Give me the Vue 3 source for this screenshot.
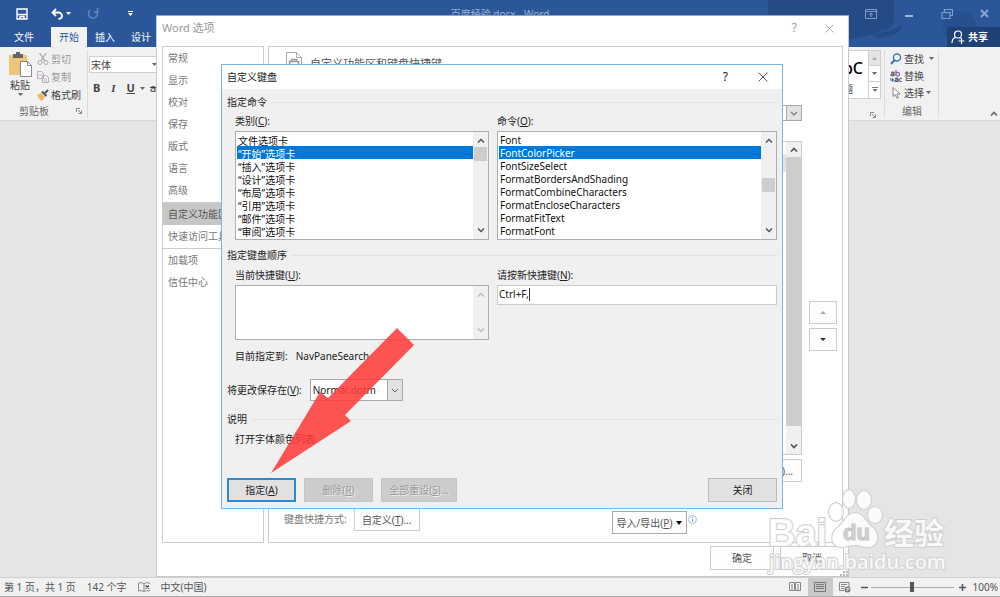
<script setup>
import { ref } from 'vue'

const tabs = ['开始', '插入', '设计']
const activeTab = ref('开始')

const navGroups = [
  ['常规', '显示', '校对', '保存', '版式', '语言', '高级'],
  ['自定义功能区', '快速访问工具栏'],
  ['加载项', '信任中心']
]
const activeNav = ref('自定义功能区')

const categories = [
  '文件选项卡',
  '“开始”选项卡',
  '“插入”选项卡',
  '“设计”选项卡',
  '“布局”选项卡',
  '“引用”选项卡',
  '“邮件”选项卡',
  '“审阅”选项卡'
]
const commands = [
  'Font',
  'FontColorPicker',
  'FontSizeSelect',
  'FormatBordersAndShading',
  'FormatCombineCharacters',
  'FormatEncloseCharacters',
  'FormatFitText',
  'FormatFont'
]
const category = ref(categories[1])
const command = ref(commands[1])
const newKey = ref('Ctrl+F,')
const currentKeys = ref('')
const zoom = ref(50)
</script>

<template>
  <div class="word">
    <header class="top">
      <svg class="top__decor" width="400" height="47" viewBox="0 0 400 47" aria-hidden="true">
        <path d="M168 0h126v20q0 8-10 10-40 16-116 17z" fill="#244b86" />
        <path d="M270 34q24-2 32-10 0 12-24 14z" fill="#244b86" />
        <circle cx="360" cy="28" r="17" fill="#265090" />
      </svg>
      <div class="titlebar">
        <div class="quick">
          <button aria-label="保存">
            <svg width="12" height="12" viewBox="0 0 12 12"><path d="M1 1h10v10H1zM1 6.500h10M4 11V8.500h4V11" fill="none" stroke="#fff" stroke-width="1.400" /></svg>
          </button>
          <button aria-label="撤消">
            <svg width="13" height="12" viewBox="0 0 13 12"><path d="M5 1L1.500 4.500 5 8M2 4.500h5.500q3.500.5 3.500 3.500 0 2.500-3.500 3" fill="none" stroke="#fff" stroke-width="1.800" /></svg>
          </button>
          <svg class="quick__caret" width="5" height="3" viewBox="0 0 5 3"><path d="M0 0h5L2.500 3z" fill="#fff" /></svg>
          <button class="quick__redo" aria-label="重复">
            <svg width="12" height="12" viewBox="0 0 12 12"><path d="M3 2.300A4.500 4.500 0 1 0 9.500 3M10.500 0v4H7" fill="none" stroke="#6688bd" stroke-width="1.500" /></svg>
          </button>
          <button aria-label="自定义快速访问工具栏">
            <svg width="5" height="5" viewBox="0 0 5 5"><path d="M0 0h5v1H0zM0 2h5L2.500 5z" fill="#fff" /></svg>
          </button>
        </div>
        <h1 class="titlebar__name">百度经验.docx - Word</h1>
        <div class="winbtns">
          <button aria-label="功能区显示选项">
            <svg width="12" height="10" viewBox="0 0 12 10"><path d="M.5.5h11v9H.5zM.5 2.500h11M6 8V4M4 6l2-2 2 2" fill="none" stroke="#7f9cc9" /></svg>
          </button>
          <button aria-label="最小化">
            <svg width="10" height="10" viewBox="0 0 10 10"><path d="M1 7h8" stroke="#9db3d6" stroke-width="2" /></svg>
          </button>
          <button aria-label="还原">
            <svg width="12" height="11" viewBox="0 0 12 11"><path d="M1 4.500h8v6H1zM3.500 4V1.500h8v6H9" fill="none" stroke="#7f9cc9" stroke-width="1.200" /></svg>
          </button>
          <button aria-label="关闭">
            <svg width="9" height="9" viewBox="0 0 9 9"><path d="M1 1l7 7M8 1L1 8" stroke="#8ba5cf" stroke-width="2" /></svg>
          </button>
        </div>
      </div>
      <nav class="tabs">
        <button class="tabs__item tabs__item--file">文件</button>
        <button
          v-for="tab in tabs"
          :key="tab"
          class="tabs__item"
          :class="{ 'tabs__item--active': tab === activeTab }"
          @click="activeTab = tab"
        >{{ tab }}</button>
        <button class="share">
          <svg width="14" height="14" viewBox="0 0 14 14"><circle cx="7" cy="4.500" r="3.500" fill="none" stroke="#fff" stroke-width="1.200" /><path d="M1 13q0-5 4-5.500M8 7.500l1.500 1M10.500 8v6M7.500 11h6" fill="none" stroke="#fff" stroke-width="1.200" /></svg>
          共享
        </button>
      </nav>
    </header>

    <section class="ribbon">
      <div class="group group--clip">
        <div class="group__body">
          <button class="paste">
            <svg width="24" height="25" viewBox="0 0 24 25"><path d="M1 3h18v20H1z" fill="#ecc57a" /><path d="M5 2h3V0h4v2h3v4H5z" fill="#666" /><path d="M12.500 9.500h7l4 4v11h-11z" fill="#fff" stroke="#888" /><path d="M19.500 9.500v4h4" fill="none" stroke="#888" /></svg>
            <span>粘贴</span>
            <svg width="5" height="3" viewBox="0 0 5 3"><path d="M0 0h5L2.500 3z" fill="#666" /></svg>
          </button>
          <div class="stack">
            <button class="tool tool--off">
              <svg width="12" height="12" viewBox="0 0 12 12"><path d="M2.500 0l5.500 8M9 0L4 8" stroke="#aaa" stroke-width="1.300" /><circle cx="3" cy="9.500" r="2" fill="none" stroke="#aaa" /><circle cx="9" cy="9.500" r="2" fill="none" stroke="#aaa" /></svg>
              剪切
            </button>
            <button class="tool tool--off">
              <svg width="12" height="12" viewBox="0 0 12 12"><path d="M.5.500h4l2 2v5h-6zM5.500 4.500h4l2 2v5h-6z" fill="#f4eef4" stroke="#bbadbd" /><path d="M2 4h3M7 8h3M7 10h3" stroke="#c9b5c9" /></svg>
              复制
            </button>
            <button class="tool">
              <svg width="12" height="12" viewBox="0 0 12 12"><path d="M0 6l4-2 4 4-3 4-2-1z" fill="#eab867" /><path d="M4 3l2-1 4 4-1 2z" fill="#555" /><path d="M8 4l3-3" stroke="#555" stroke-width="2" /></svg>
              格式刷
            </button>
          </div>
        </div>
        <div class="group__foot">
          <span>剪贴板</span>
          <svg width="6" height="6" viewBox="0 0 6 6"><path d="M.5 4V.5H4M2 2l3 3M5.500 2.500v3h-3" fill="none" stroke="#888" /></svg>
        </div>
      </div>
      <div class="group group--font">
        <label class="fontbox">
          <input type="text" value="宋体" aria-label="字体" />
          <svg width="5" height="3" viewBox="0 0 5 3"><path d="M0 0h5L2.500 3z" fill="#666" /></svg>
        </label>
        <div class="fmt">
          <button><b>B</b></button>
          <button><i>I</i></button>
          <button><u>U</u></button>
          <svg width="5" height="3" viewBox="0 0 5 3"><path d="M0 0h5L2.500 3z" fill="#666" /></svg>
          <button><s>abc</s></button>
        </div>
      </div>

      <div class="group group--styles">
        <div class="styles">
          <button class="styles__tile">
            <span class="styles__sample">AaBbC</span>
            <span class="styles__name">标题</span>
          </button>
          <div class="styles__scroll">
            <button class="off" aria-label="上一行"><svg width="5" height="3" viewBox="0 0 5 3"><path d="M0 3h5L2.500 0z" fill="#aaa" /></svg></button>
            <button aria-label="下一行"><svg width="5" height="3" viewBox="0 0 5 3"><path d="M0 0h5L2.500 3z" fill="#666" /></svg></button>
            <button aria-label="其他"><svg width="6" height="5" viewBox="0 0 6 5"><path d="M0 0h6v1H0zM.5 2h5L3 5z" fill="#777" /></svg></button>
          </div>
        </div>
        <div class="group__foot">
          <svg width="6" height="6" viewBox="0 0 6 6"><path d="M.5 4V.5H4M2 2l3 3M5.500 2.500v3h-3" fill="none" stroke="#888" /></svg>
        </div>
      </div>
      <div class="group group--edit">
        <div class="stack">
          <button class="tool">
            <svg width="12" height="12" viewBox="0 0 12 12"><circle cx="7" cy="4.500" r="3.500" fill="#fff" stroke="#3a76b8" stroke-width="1.500" /><path d="M4.500 7L1 11" stroke="#3a76b8" stroke-width="2" /></svg>
            查找
            <svg class="tool__caret" width="5" height="3" viewBox="0 0 5 3"><path d="M0 0h5L2.500 3z" fill="#666" /></svg>
          </button>
          <button class="tool">
            <svg width="12" height="12" viewBox="0 0 12 12">
              <g fill="none" stroke="#555" stroke-width="1.200">
                <path d="M1 2.500q3-1 3 .5v3M4 4Q1 3.500 1 5q.5 1.500 3 0" />
                <path d="M5 8.500q3-1 3 .5v3M8 10q-3-.5-3 1 .5 1.500 3 0" />
              </g>
              <path d="M6 0v6M6 3q3.500-1.500 3.500 1T6 5.500" fill="none" stroke="#9559b5" stroke-width="1.300" />
              <path d="M12 8.500q-2.500-.5-2.500 1.500t2.500 1.500M0 8v2h3M2 8.500L3.500 10 2 11.500" fill="none" stroke="#3a76b8" stroke-width="1.100" />
            </svg>
            替换
          </button>
          <button class="tool">
            <svg width="12" height="12" viewBox="0 0 12 12"><path d="M3 .5v9l2.200-2 1.800 4 1.500-.7-1.700-3.800H10z" fill="#fff" stroke="#888" /></svg>
            选择
            <svg width="5" height="3" viewBox="0 0 5 3"><path d="M0 0h5L2.500 3z" fill="#666" /></svg>
          </button>
        </div>
        <div class="group__foot"><span>编辑</span></div>
      </div>
      <button class="collapse" aria-label="折叠功能区">
        <svg width="8" height="5" viewBox="0 0 8 5"><path d="M1 4.500l3-3 3 3" fill="none" stroke="#666" stroke-width="1.600" /></svg>
      </button>
    </section>

    <main class="canvas"></main>

    <footer class="status">
      <span>第 1 页，共 1 页</span>
      <span>142 个字</span>
      <svg width="12" height="10" viewBox="0 0 12 10"><path d="M6 1.500Q3 0 .5 1v8Q3 8 6 9.500zM6 1.500Q8 0 11.500 1v1M6 9.500Q8 8 11.500 9V8" fill="none" stroke="#888" /><path d="M7.500 3.500l3.500 3M11 3.500l-3.500 3" stroke="#444" stroke-width="1.200" /></svg>
      <span>中文(中国)</span>
      <div class="status__views">
        <button aria-label="阅读视图">
          <svg width="12" height="10" viewBox="0 0 12 10"><path d="M.5.5h5v8h-5zM6.500.5h5v8h-5zM2 3h2M2 5h2M2 7h2M8 3h2M8 5h2M8 7h2" fill="none" stroke="#888" /></svg>
        </button>
        <button class="on" aria-label="页面视图">
          <svg width="12" height="10" viewBox="0 0 12 10"><path d="M.5.5h11v9H.5zM2 2.500h8M2 4.500h8M2 6.500h8" fill="none" stroke="#777" /></svg>
        </button>
        <button aria-label="Web 版式视图">
          <svg width="12" height="11" viewBox="0 0 12 11"><path d="M10 5V.5H.5v8H5M2 2.500h6M2 4.500h4M2 6.500h3" fill="none" stroke="#888" /><circle cx="8.500" cy="7.500" r="3" fill="#777" /><path d="M7 6l2 1-1 2M10 6v2" stroke="#eee" fill="none" /></svg>
        </button>
      </div>
      <div class="status__zoom">
        <button aria-label="缩小"><svg width="7" height="7" viewBox="0 0 7 7"><path d="M0 3.500h7" stroke="#555" stroke-width="1.500" /></svg></button>
        <input v-model="zoom" type="range" min="0" max="100" aria-label="显示比例" />
        <button aria-label="放大"><svg width="7" height="7" viewBox="0 0 7 7"><path d="M0 3.500h7M3.500 0v7" stroke="#555" stroke-width="1.500" /></svg></button>
        <span class="status__pct">100%</span>
      </div>
    </footer>

    <!-- Word options window -->
    <section class="options">
      <div class="options__title">
        <h2>Word 选项</h2>
        <button aria-label="帮助">?</button>
        <button aria-label="关闭选项">
          <svg width="9" height="9" viewBox="0 0 9 9"><path d="M.5.5l8 8M8.500.5l-8 8" stroke="#aaa" /></svg>
        </button>
      </div>
      <div class="options__body">
        <nav class="side">
          <div v-for="(group, i) in navGroups" :key="i" class="side__group">
            <button
              v-for="item in group"
              :key="item"
              :class="{ active: item === activeNav }"
              @click="activeNav = item"
            >{{ item }}</button>
          </div>
        </nav>
        <div class="pane">
          <div class="pane__head">
            <svg width="18" height="22" viewBox="0 0 18 22"><path d="M1.500 20V.5h10l5 5V20M11.500.5v5h5" fill="#fff" stroke="#aaa" /><path d="M4.500 15V9.500h9V15M6.500 9V7.500h5V9" fill="none" stroke="#999" stroke-width="1.500" /></svg>
            <h3>自定义功能区和键盘快捷键</h3>
          </div>
          <div class="pane__main">
            <div class="pane__col">
              <div class="combo combo--wide">
                <select aria-label="自定义功能区"></select>
                <span class="combo__arrow"><svg width="8" height="5" viewBox="0 0 8 5"><path d="M1 1l3 3 3-3" fill="none" stroke="#777" stroke-width="1.200" /></svg></span>
              </div>
              <div class="treebox">
                <div class="treebox__row"></div>
                <div class="vbar vbar--long">
                  <svg width="8" height="5" viewBox="0 0 8 5"><path d="M1 4.500l3-3 3 3" fill="none" stroke="#555" stroke-width="1.700" /></svg>
                  <span class="vbar__track"></span>
                  <svg width="8" height="5" viewBox="0 0 8 5"><path d="M1 .5l3 3 3-3" fill="none" stroke="#555" stroke-width="1.700" /></svg>
                </div>
              </div>
              <button class="flat flat--rename"><span>重命名(<u>M</u>)...</span></button>
            </div>
            <div class="pane__move">
              <button class="flat" aria-label="上移"><svg width="6" height="3" viewBox="0 0 6 3"><path d="M0 3h6L3 0z" fill="#aaa" /></svg></button>
              <button class="flat" aria-label="下移"><svg width="6" height="3" viewBox="0 0 6 3"><path d="M0 0h6L3 3z" fill="#333" /></svg></button>
            </div>
          </div>
          <div class="pane__foot">
            <span>键盘快捷方式:</span>
            <button class="flat flat--custom"><span>自定义(<u>T</u>)...</span></button>
            <button class="flat flat--export">
              <span>导入/导出(<u>P</u>)</span>
              <svg width="6" height="4" viewBox="0 0 6 4"><path d="M0 0h6L3 4z" fill="#000" /></svg>
            </button>
            <svg class="info" width="9" height="9" viewBox="0 0 9 9"><circle cx="4.500" cy="4.500" r="4" fill="#fff" stroke="#9cbbe3" /><path d="M4.500 4v3M4.500 2v1" stroke="#7ba3d8" /></svg>
          </div>
        </div>
      </div>
      <div class="options__foot">
        <button class="flat">确定</button>
        <button class="flat">取消</button>
      </div>
      <svg class="grip" width="8" height="8" viewBox="0 0 8 8"><path d="M6 0h2v2H6zM3 3h2v2H3zM6 3h2v2H6zM0 6h2v2H0zM3 6h2v2H3zM6 6h2v2H6z" fill="#bbb" /></svg>
    </section>

    <!-- Customize keyboard window -->
    <section class="dialog">
      <div class="dialog__title">
        <h2>自定义键盘</h2>
        <button aria-label="键盘帮助">?</button>
        <button aria-label="关闭键盘窗口">
          <svg width="10" height="10" viewBox="0 0 10 10"><path d="M.5.5l9 9M9.500.5l-9 9" stroke="#555" /></svg>
        </button>
      </div>
      <div class="dialog__body">
        <h3 class="legend">指定命令</h3>
        <div class="cols cols--lists">
          <div class="field">
            <label for="category">类别(<u>C</u>):</label>
            <div class="box">
              <select id="category" v-model="category" size="8">
                <option v-for="c in categories" :key="c">{{ c }}</option>
              </select>
              <div class="vbar">
                <svg width="8" height="5" viewBox="0 0 8 5"><path d="M1 4.500l3-3 3 3" fill="none" stroke="#555" stroke-width="1.500" /></svg>
                <span class="vbar__track"><i class="vbar__thumb"></i></span>
                <svg width="8" height="5" viewBox="0 0 8 5"><path d="M1 .5l3 3 3-3" fill="none" stroke="#555" stroke-width="1.500" /></svg>
              </div>
            </div>
          </div>
          <div class="field">
            <label for="command">命令(<u>O</u>):</label>
            <div class="box">
              <select id="command" v-model="command" size="8">
                <option v-for="c in commands" :key="c">{{ c }}</option>
              </select>
              <div class="vbar">
                <svg width="8" height="5" viewBox="0 0 8 5"><path d="M1 4.500l3-3 3 3" fill="none" stroke="#555" stroke-width="1.500" /></svg>
                <span class="vbar__track vbar__track--mid"><i class="vbar__thumb"></i></span>
                <svg width="8" height="5" viewBox="0 0 8 5"><path d="M1 .5l3 3 3-3" fill="none" stroke="#555" stroke-width="1.500" /></svg>
              </div>
            </div>
          </div>
        </div>

        <h3 class="legend legend--keys">指定键盘顺序</h3>
        <div class="cols cols--keys">
          <div class="field">
            <label for="current">当前快捷键(<u>U</u>):</label>
            <div class="box box--area">
              <textarea id="current" v-model="currentKeys"></textarea>
              <div class="vbar">
                <svg width="8" height="5" viewBox="0 0 8 5"><path d="M1 4.500l3-3 3 3" fill="none" stroke="#bbb" stroke-width="1.500" /></svg>
                <span class="vbar__track"></span>
                <svg width="8" height="5" viewBox="0 0 8 5"><path d="M1 .5l3 3 3-3" fill="none" stroke="#bbb" stroke-width="1.500" /></svg>
              </div>
            </div>
          </div>
          <div class="field">
            <label for="newkey">请按新快捷键(<u>N</u>):</label>
            <div class="box box--key">
              <input id="newkey" v-model="newKey" type="text" />
              <span class="cursor"></span>
            </div>
          </div>
        </div>

        <p class="assigned"><span>目前指定到:</span><span>NavPaneSearch</span></p>

        <div class="save">
          <label for="savein">将更改保存在(<u>V</u>):</label>
          <div class="combo combo--save">
            <select id="savein"><option>Normal.dotm</option></select>
            <span class="combo__arrow"><svg width="8" height="5" viewBox="0 0 8 5"><path d="M1 1l3 3 3-3" fill="none" stroke="#666" /></svg></span>
          </div>
        </div>

        <h3 class="legend legend--desc">说明</h3>
        <p class="desc">打开字体颜色列表</p>

        <div class="actions">
          <button class="btn btn--default">指定(<u>A</u>)</button>
          <button class="btn" disabled>删除(<u>R</u>)</button>
          <button class="btn btn--reset" disabled>全部重设(<u>S</u>)...</button>
          <button class="btn btn--close">关闭</button>
        </div>
      </div>
      <svg class="pointer" width="144" height="146" viewBox="0 0 144 146" aria-hidden="true">
        <path d="M0 145L49 64l8 6L126 0l17 17-69 70 6 6z" fill="#ff3c3c" fill-opacity=".87" />
      </svg>
    </section>

    <svg class="mark" width="182" height="90" viewBox="0 0 182 90">
      <g class="mark__shape">
        <text x="0" y="59" class="mark__bai">Bai</text>
        <ellipse cx="68" cy="25" rx="7" ry="9" />
        <ellipse cx="81" cy="12" rx="6" ry="9" />
        <ellipse cx="96" cy="13" rx="7" ry="9" />
        <ellipse cx="107" cy="28" rx="7" ry="8" />
        <path d="M87 26c8 0 10 8 17 14 7 5 8 19-3 20-6 1-9-2-14-2s-9 3-15 2c-11-2-9-15-2-20 7-6 9-14 17-14z" />
        <text x="116" y="57" class="mark__jy">经验</text>
      </g>
      <text x="75" y="53" class="mark__du">du</text>
      <text x="1" y="82" class="mark__url">jingyan.baidu.com</text>
    </svg>
  </div>
</template>

<style>
body {
  margin: 0;
}
</style>

<style scoped>
.word {
  position: relative;
  display: flex;
  flex-direction: column;
  min-height: 100vh;
  overflow: hidden;
  background: #e5e5e5;
  color: #444;
  font-family: "Noto Sans", "Noto Sans CJK SC", sans-serif;
  font-size: 10px;
  line-height: 16px;
}

.word *,
.word *::before,
.word *::after {
  box-sizing: border-box;
}

h1, h2, h3, p {
  margin: 0;
  font-size: 10px;
  font-weight: 400;
}

button, input, select, textarea {
  margin: 0;
  padding: 0;
  border: 0;
  border-radius: 0;
  background: none;
  color: inherit;
  font: inherit;
  white-space: nowrap;
  outline: none;
}

svg {
  flex: none;
  display: block;
}

/* title bar and tabs */
.top {
  position: relative;
  background: #2b579a;
  color: #fff;
}

.top__decor {
  position: absolute;
  top: 0;
  right: 0;
}

.titlebar {
  position: relative;
  display: grid;
  grid-template-columns: 1fr auto 1fr;
  align-items: center;
  height: 27px;
}

.titlebar__name {
  color: #9db3d6;
}

.quick {
  display: flex;
  align-items: center;
  padding-left: 16px;
}

.quick button + button {
  margin-left: 23px;
}

.quick__caret {
  margin-left: 2px;
}

.quick .quick__redo {
  margin-left: 16px;
}

.quick .quick__redo + button {
  margin-left: 29px;
}

.winbtns {
  display: flex;
  align-items: center;
  justify-content: flex-end;
  gap: 27px;
  padding-right: 11px;
}

.tabs {
  position: relative;
  display: flex;
  height: 20px;
}

.tabs__item {
  width: 36px;
  line-height: 18px;
}

.tabs__item--file {
  width: 48px;
  margin-right: 3px;
}

.tabs__item--active {
  background: #f1f1f1;
  color: #2b579a;
}

.share {
  display: flex;
  align-items: center;
  gap: 3px;
  width: 53px;
  margin-left: auto;
  padding-left: 4px;
  background: #1e4176;
  font-weight: 700;
}

/* ribbon */
.ribbon {
  display: flex;
  min-height: 74px;
  border-bottom: 1px solid #d8d8d8;
  background: #f1f1f1;
}

.group {
  display: flex;
  flex-direction: column;
  margin: 3px 0 2px;
  border-right: 1px solid #dcdcdc;
}

.group--clip {
  width: 88px;
  padding-left: 7px;
}

.group__body {
  display: flex;
  gap: 4px;
}

.group__foot {
  display: flex;
  align-items: center;
  justify-content: flex-end;
  gap: 27px;
  margin-top: auto;
  padding-right: 5px;
  color: #666;
  line-height: 14px;
}

.paste {
  display: flex;
  flex-direction: column;
  align-items: center;
  width: 26px;
  padding-top: 2px;
}

.stack {
  display: flex;
  flex-direction: column;
}

.tool {
  display: flex;
  align-items: center;
  gap: 2px;
  height: 18px;
}

.tool--off {
  color: #999;
}

.group--font {
  border: 0;
  padding: 6px 0 0 1px;
}

.fontbox {
  display: flex;
  align-items: center;
  width: 72px;
  height: 17px;
  border: 1px solid #d0d0d0;
  background: #fff;
}

.fontbox input {
  width: 62px;
  padding-left: 1px;
}

.fmt {
  display: flex;
  align-items: center;
  gap: 9px;
  padding: 7px 0 0 4px;
  font-size: 11px;
}

.fmt svg {
  margin: 0 -4px;
}

.fmt i {
  padding: 0 2px;
  font-family: "Liberation Serif", serif;
  font-weight: 700;
}

.fmt u {
  font-weight: 700;
}

.group--styles {
  width: 80px;
  margin-left: auto;
  padding-right: 3px;
}

.styles {
  display: flex;
  justify-content: flex-end;
  height: 49px;
  border: 1px solid #d0d0d0;
  background: #fff;
}

.styles__tile {
  display: flex;
  flex: 1;
  flex-direction: column;
  align-items: flex-end;
  justify-content: space-between;
  padding: 9px 5px 1px 0;
}

.styles__sample {
  color: #000;
  font-size: 16px;
  font-weight: 500;
}

.styles__name {
  padding-right: 10px;
}

.styles__scroll {
  display: grid;
  width: 12px;
  border-left: 1px solid #d0d0d0;
}

.styles__scroll button {
  display: grid;
  place-items: center;
}

.styles__scroll button + button {
  border-top: 1px solid #d0d0d0;
}

.styles__scroll .off {
  background: #e4e4e4;
}

.group--edit {
  width: 54px;
  padding-left: 5px;
}

.group--edit .tool {
  height: 17px;
}

.group--edit .group__foot {
  justify-content: center;
  padding-right: 4px;
}

.tool__caret {
  margin-left: 3px;
}

.collapse {
  align-self: flex-end;
  margin-left: 51px;
  padding: 0 2px 4px 0;
}

.canvas {
  flex: 1;
}

/* status bar */
.status {
  display: flex;
  align-items: center;
  gap: 11px;
  height: 20px;
  padding-left: 4px;
  border-top: 1px solid #d0d0d0;
  border-bottom: 1px solid #aaa;
  background: #f1f1f1;
  color: #555;
}

.status__views {
  display: flex;
  align-self: stretch;
  margin-left: auto;
}

.status__views button {
  display: grid;
  place-items: center;
  width: 25px;
}

.status__views .on {
  background: #c9c9c9;
}

.status__zoom {
  display: flex;
  align-items: center;
  margin-left: -8px;
}

.status__zoom input {
  width: 83px;
  height: 10px;
  margin: 0 5px 0 3px;
  background: linear-gradient(#aaa, #aaa) center / 100% 1px no-repeat;
  appearance: none;
}

.status__zoom input::-webkit-slider-thumb {
  width: 4px;
  height: 10px;
  background: #555;
  appearance: none;
}

.status__pct {
  padding: 0 2px 0 7px;
}

/* options window */
.options {
  position: absolute;
  inset: 15px 151px 20px 156px;
  display: flex;
  flex-direction: column;
  border: 1px solid #c4c8d0;
  border-top-color: #8ea6cc;
  background: #fff;
  color: #777;
}

.options__title {
  display: flex;
  align-items: center;
  height: 30px;
  padding: 0 14px 6px 5px;
  color: #999;
}

.options__title h2 {
  margin-right: auto;
  font-size: 11px;
}

.options__title button {
  margin-left: 28px;
}

.options__title button:first-of-type {
  font-size: 12px;
}

.options__body {
  display: flex;
  flex: 1;
  gap: 4px;
  padding: 0 5px 0 5px;
}

.side {
  width: 102px;
  border: 1px solid #ccc;
}

.side__group + .side__group {
  border-top: 1px solid #ccc;
}

.side__group {
  padding-bottom: 1px;
}

.side button {
  display: block;
  width: 100%;
  height: 22px;
  padding-left: 5px;
  text-align: left;
}

.side .active {
  background: #c6c6c6;
  color: #555;
}

.pane {
  display: flex;
  flex: 1;
  flex-direction: column;
  min-width: 0;
  border: 1px solid #ccc;
}

.pane__head {
  display: flex;
  gap: 7px;
  padding: 5px 0 0 16px;
  color: #555;
}

.pane__head h3 {
  padding-top: 4px;
  font-size: 11px;
}

.pane__main {
  display: flex;
  flex: 1;
  gap: 7px;
  padding: 31px 5px 0 16px;
}

.pane__col {
  display: flex;
  flex: 1;
  flex-direction: column;
  align-items: flex-end;
}

.combo {
  display: flex;
  border: 1px solid #aaa;
  background: #fff;
}

.combo select {
  flex: 1;
  min-width: 0;
  padding-left: 2px;
  appearance: none;
}

.combo__arrow {
  display: grid;
  place-items: center;
  width: 15px;
  border-left: 1px solid #aaa;
  background: #e1e1e1;
}

.combo--wide {
  width: 200px;
  height: 16px;
}

.treebox {
  display: flex;
  flex: 1;
  align-items: flex-start;
  width: 200px;
  margin: 20px 0 4px;
  border: 1px solid #ccc;
}

.treebox__row {
  flex: 1;
  height: 18px;
  margin-top: 12px;
  background: #dfe5ef;
}

.vbar {
  display: flex;
  flex-direction: column;
  align-items: center;
  align-self: stretch;
  width: 15px;
  padding: 6px 0;
  background: #f0f0f0;
}

.vbar__track {
  flex: 1;
  width: 100%;
  margin: 4px 0;
}

.vbar__thumb {
  display: block;
  width: 13px;
  height: 14px;
  margin: 0 auto;
  background: #cdcdcd;
}

.vbar__track--mid {
  display: flex;
  flex-direction: column;
  justify-content: center;
  padding-bottom: 1px;
}

.vbar--long {
  width: 15px;
  padding: 5px 0;
}

.vbar--long .vbar__track {
  margin: 5px 0 18px;
  background: #cdcdcd;
}

.flat {
  display: flex;
  align-items: center;
  justify-content: center;
  height: 23px;
  border: 1px solid #ccc;
  background: #fdfdfd;
  color: #555;
}

.flat--rename {
  width: 76px;
  justify-content: flex-end;
  padding-right: 8px;
}

.pane__move {
  display: flex;
  flex-direction: column;
  justify-content: center;
  gap: 4px;
  width: 28px;
  padding-top: 64px;
}

.pane__foot {
  display: flex;
  align-items: flex-start;
  padding: 26px 145px 8px 15px;
}

.pane__foot > span {
  line-height: 22px;
}

.flat--custom {
  width: 66px;
  margin-left: 7px;
}

.flat--export {
  gap: 4px;
  width: 75px;
  margin: 3px 1px 0 auto;
  border-color: #aaa;
}

.info {
  margin-top: 7px;
}

.options__foot {
  display: flex;
  justify-content: flex-end;
  gap: 6px;
  padding: 3px 4px 6px;
}

.options__foot .flat {
  width: 64px;
  height: 24px;
}

.grip {
  position: absolute;
  right: 0;
  bottom: 0;
}

/* keyboard window */
.dialog {
  position: absolute;
  top: 64px;
  right: 217px;
  left: 221px;
  border: 1px solid #77b6ea;
  background: #f0f0f0;
  color: #222;
}

.dialog__title {
  display: flex;
  align-items: center;
  height: 24px;
  padding: 0 14px 0 5px;
  background: #fff;
}

.dialog__title h2 {
  margin-right: auto;
}

.dialog__title button {
  margin-left: 30px;
}

.dialog__title button:first-of-type {
  font-size: 12px;
}

.dialog__body {
  padding: 5px 5px 6px;
}

.legend {
  display: flex;
  align-items: center;
  gap: 4px;
}

.legend::after {
  flex: 1;
  height: 1px;
  background: #e2e2e2;
  content: "";
}

.legend--keys {
  margin-top: 7px;
}

.legend--desc {
  margin-top: 10px;
}

.cols {
  display: grid;
  grid-template-columns: 254fr 280fr;
  gap: 8px;
  margin-top: 3px;
  padding-left: 8px;
}

.cols--keys {
  margin-top: 4px;
}

.field {
  display: flex;
  flex-direction: column;
  gap: 2px;
  min-width: 0;
}

.box {
  display: flex;
  height: 109px;
  border: 1px solid #abadb3;
  background: #fff;
}

.box select {
  flex: 1;
  min-width: 0;
  padding: 1px 0 0 1px;
  overflow: hidden;
  scrollbar-width: none;
}

.box option {
  min-height: 13px;
  height: 13px;
  padding: 0 0 0 1px;
  color: #111;
  line-height: 13px;
}

.box option:checked {
  background: #0078d7 linear-gradient(#0078d7, #0078d7);
  color: #fff;
}

.box--area {
  height: 55px;
}

.box--area textarea {
  flex: 1;
  min-width: 0;
  resize: none;
}

.box--key {
  align-items: center;
  height: 20px;
  padding: 0 1px 2px;
  border-color: #ccc;
}

.box--key input {
  field-sizing: content;
}

.cursor {
  width: 1px;
  height: 13px;
  background: #333;
}

.assigned {
  display: flex;
  gap: 8px;
  margin-top: 8px;
  padding-left: 8px;
}

.save {
  display: flex;
  align-items: center;
  gap: 8px;
  margin-top: 15px;
}

.combo--save {
  width: 93px;
  height: 22px;
}

.desc {
  margin-top: 4px;
  padding-left: 8px;
}

.actions {
  display: flex;
  gap: 8px;
  margin-top: 31px;
}

.btn {
  width: 69px;
  height: 24px;
  border: 1px solid #bbb;
  background: #e1e1e1;
}

.btn:disabled {
  border-color: #c4c4c4;
  background: #ccc;
  color: #999;
  text-shadow: 1px 1px 0 #eee;
}

.btn--default {
  border: 2px solid #2f86d2;
}

.btn--reset {
  width: 76px;
}

.btn--close {
  margin-left: auto;
}

.pointer {
  position: absolute;
  top: 263px;
  left: 49px;
  pointer-events: none;
}

/* site mark in the corner */
.mark {
  position: absolute;
  right: 50px;
  bottom: 20px;
  overflow: visible;
  pointer-events: none;
}

.mark__shape {
  fill: #fff;
  fill-opacity: .85;
  stroke: #cfcfcf;
  stroke-width: 2;
  paint-order: stroke;
}

.mark__bai {
  font: 700 38px "Liberation Sans", sans-serif;
}

.mark__jy {
  font: 700 30px "Noto Sans CJK SC", sans-serif;
}

.mark__du {
  fill: #d4d4d4;
  stroke: #c4c4c4;
  font: 700 22px "Liberation Sans", sans-serif;
}

.mark__url {
  fill: #fff;
  fill-opacity: .85;
  stroke: #d2d2d2;
  stroke-width: 2;
  paint-order: stroke;
  font: 600 20px "Open Sans", sans-serif;
}
</style>
